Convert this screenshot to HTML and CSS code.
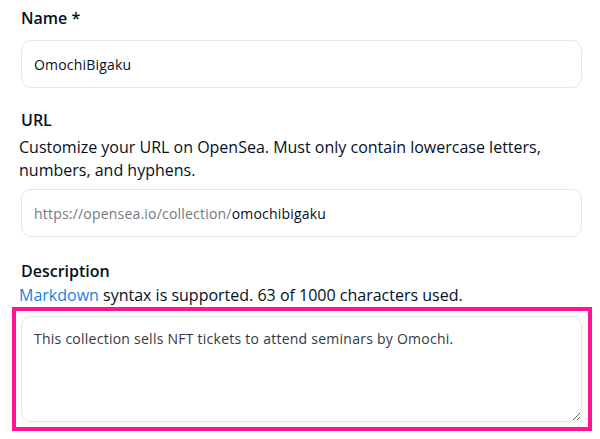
FILE: index.html
```html
<!DOCTYPE html>
<html lang="en">
<head>
<meta charset="utf-8">
<title>Collection form</title>
<link rel="stylesheet" href="styles.css">
</head>
<body>
<form class="form">
  <div class="field">
    <label class="label" for="name">Name *</label>
    <div class="input"><input id="name" type="text" value="OmochiBigaku"></div>
  </div>
  <div class="field field-url">
    <label class="label" for="url">URL</label>
    <p class="help">Customize your URL on OpenSea. Must only contain lowercase letters, numbers, and hyphens.</p>
    <div class="input"><span class="prefix">https://opensea.io/collection/</span><input id="url" type="text" value="omochibigaku"></div>
  </div>
  <div class="field field-desc">
    <label class="label" for="desc">Description</label>
    <p class="help"><a class="link" href="#">Markdown</a> syntax is supported. 63 of 1000 characters used.</p>
    <div class="highlight">
      <textarea id="desc" class="textarea">This collection sells NFT tickets to attend seminars by Omochi.</textarea>
    </div>
  </div>
</form>
</body>
</html>
```
FILE: styles.css
```css
html, body {
  margin: 0;
  padding: 0;
  background: #ffffff;
}
body {
  font-family: "Open Sans", "Liberation Sans", sans-serif;
  color: #04111d;
}
.form {
  padding: 6px 18px 0 21px;
}
.field {
  display: flex;
  flex-direction: column;
}
.label {
  font-size: 16px;
  font-weight: 600;
  line-height: 24px;
  color: #04111d;
}
.field-url {
  margin-top: 20px;
}
.field-desc {
  margin-top: 22px;
}
.help {
  margin: 4px 0 0 -2px;
  font-size: 16px;
  line-height: 23px;
  color: #04111d;
  letter-spacing: 0;
}
.field-desc .help {
  margin-top: 1px;
}
.link {
  color: #2081e2;
  text-decoration: none;
}
.input {
  display: flex;
  align-items: center;
  height: 48px;
  box-sizing: border-box;
  border: 1px solid #e5e8eb;
  border-radius: 10px;
  padding: 0 12px;
  margin-top: 10px;
  font-size: 14px;
  letter-spacing: 0.2px;
}
.field-url .input {
  margin-top: 7px;
}
.input input {
  flex: 1;
  border: none;
  outline: none;
  padding: 0;
  margin: 0;
  font: inherit;
  letter-spacing: inherit;
  color: #04111d;
  background: transparent;
}
.prefix {
  color: #707a83;
}
.highlight {
  margin: 0 -10px 0 -9px;
  border: 4px solid #ff1493;
  padding: 5px 6px 5px 5px;
}
.textarea {
  display: block;
  width: 100%;
  box-sizing: border-box;
  height: 106px;
  border: 1px solid #e5e8eb;
  border-radius: 10px;
  padding: 12px 12px;
  font-family: inherit;
  font-size: 14px;
  letter-spacing: 0.25px;
  line-height: 20px;
  color: #353840;
  resize: both;
  outline: none;
}
```
